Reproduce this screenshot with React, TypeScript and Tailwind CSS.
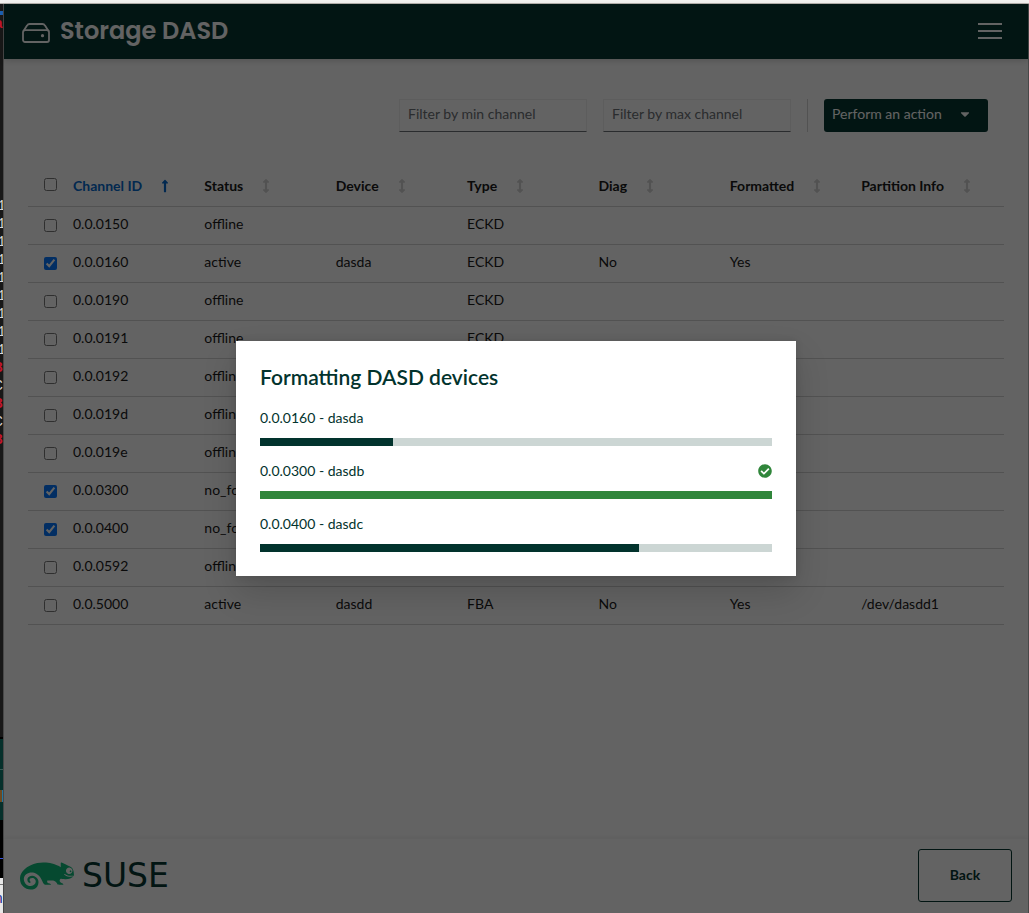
import React from "react";
import { FaArrowsAltV, FaCaretDown, FaCheckCircle, FaLongArrowAltUp } from "react-icons/fa";
import { SiSuse } from "react-icons/si";

type Device = {
  channel: string;
  status: string;
  device?: string;
  type: string;
  diag?: string;
  formatted?: string;
  partition?: string;
  selected?: boolean;
};

const devices: Device[] = [
  { channel: "0.0.0150", status: "offline", type: "ECKD" },
  { channel: "0.0.0160", status: "active", device: "dasda", type: "ECKD", diag: "No", formatted: "Yes", selected: true },
  { channel: "0.0.0190", status: "offline", type: "ECKD" },
  { channel: "0.0.0191", status: "offline", type: "ECKD" },
  { channel: "0.0.0192", status: "offline", type: "ECKD" },
  { channel: "0.0.019d", status: "offline", type: "ECKD" },
  { channel: "0.0.019e", status: "offline", type: "ECKD" },
  { channel: "0.0.0300", status: "no_format", device: "dasdb", type: "ECKD", diag: "No", formatted: "No", selected: true },
  { channel: "0.0.0400", status: "no_format", device: "dasdc", type: "ECKD", diag: "No", formatted: "No", selected: true },
  { channel: "0.0.0592", status: "offline", type: "ECKD" },
  { channel: "0.0.5000", status: "active", device: "dasdd", type: "FBA", diag: "No", formatted: "Yes", partition: "/dev/dasdd1" },
];

const columns = ["Channel ID", "Status", "Device", "Type", "Diag", "Formatted", "Partition Info"];

const jobs = [
  { name: "0.0.0160 - dasda", value: 26 },
  { name: "0.0.0300 - dasdb", value: 100 },
  { name: "0.0.0400 - dasdc", value: 74 },
];

const terminalLines = ["1", "1", "1", "1", "1", "1", "1", "1", "1", "8", "C", "8", "C", "8"];

const terminalStyles: Record<string, string> = {
  "1": "justify-center text-[#d8d8d8]",
  "8": "justify-end font-bold text-[#c4142c]",
  C: "justify-end text-[#d8d8d8]",
};

function TerminalEdge() {
  return (
    <div aria-hidden="true" className="flex w-[3px] shrink-0 flex-col overflow-hidden bg-[#181818] font-['Liberation_Mono',monospace] text-sm">
      <div className="mt-[7px] h-1 bg-[#1c62b5]" />
      <div className="flex h-[18px] shrink-0 items-center justify-end font-bold text-[#c4142c]">a</div>
      <div className="h-[164px] shrink-0" />
      {terminalLines.map((line, i) => (
        <div key={i} className={`flex h-[18px] shrink-0 items-center ${terminalStyles[line]}`}>
          {line}
        </div>
      ))}
      <div className="min-h-0 flex-1" />
      <div className="h-8 shrink-0 border-t-2 border-black bg-[#06302b]" />
      <div className="h-[21px] shrink-0 border-t border-[#3a5a55] bg-[#06302b]" />
      <div className="flex h-3 shrink-0 justify-end bg-[#6b4a22]">
        <div className="w-px bg-[#2277a5]" />
      </div>
      <div className="h-[18px] shrink-0 bg-[#06302b]" />
      <div className="h-[38px] shrink-0 bg-black" />
      <div className="h-5 shrink-0 border-t border-[#3a55e0] bg-black" />
      <div className="h-[7px] shrink-0 border-b border-[#777] bg-[#e8e8e8]" />
      <div className="flex h-7 shrink-0 items-center justify-end bg-[#e8e8e8] text-[#1c1c8c]">n</div>
    </div>
  );
}

function DriveIcon() {
  return (
    <svg viewBox="0 -4 28 24" className="h-6 w-7" fill="none" stroke="currentColor" strokeWidth="1.8" strokeLinejoin="round" aria-hidden="true">
      <path d="M1.200 8.500 5 2.600Q5.900 1 7.600 1H20.400Q22.100 1 23 2.600L26.800 8.500" />
      <rect x="1" y="7.200" width="26" height="11.800" rx="2" />
      <circle cx="20.500" cy="12.700" r="1.600" fill="currentColor" stroke="none" />
    </svg>
  );
}

function FilterInput({ id, label }: { id: string; label: string }) {
  return (
    <input
      id={id}
      type="text"
      aria-label={label}
      placeholder={label}
      className="h-[33px] w-[188px] border border-[#f0f0f0] border-b-[#6a6e73] bg-white px-2 pb-1 text-sm text-[#151515] placeholder:text-[#6a6e73]"
    />
  );
}

function DeviceTable() {
  return (
    <table className="mt-8 w-full table-fixed text-left text-sm">
      <colgroup>
        <col className="w-[37px]" />
        <col className="w-[13.46%]" />
        <col className="w-[13.46%]" />
        <col className="w-[13.46%]" />
        <col className="w-[13.46%]" />
        <col className="w-[13.46%]" />
        <col className="w-[13.46%]" />
        <col />
      </colgroup>
      <thead>
        <tr className="h-[42px] border-b border-[#d2d2d2]">
          <th className="pl-4">
            <input type="checkbox" aria-label="Select all devices" className="block size-[13px]" />
          </th>
          {columns.map((name, i) => (
            <th key={name} className="px-2 pt-[2px] font-bold whitespace-nowrap">
              <button type="button" className={i === 0 ? "flex items-center gap-4 text-[#0066cc]" : "flex items-center gap-4"}>
                {name}
                {i === 0 ? <FaLongArrowAltUp className="size-3.5" /> : <FaArrowsAltV className="size-3.5 text-[#d2d2d2]" />}
              </button>
            </th>
          ))}
        </tr>
      </thead>
      <tbody>
        {devices.map((d) => (
          <tr key={d.channel} className="h-[38px] border-b border-[#d2d2d2]">
            <td className="pl-4">
              <input type="checkbox" aria-label={`Select ${d.channel}`} defaultChecked={d.selected} className="block size-[13px]" />
            </td>
            <td className="px-2 pb-[2px]">{d.channel}</td>
            <td className="px-2 pb-[2px]">{d.status}</td>
            <td className="px-2 pb-[2px]">{d.device}</td>
            <td className="px-2 pb-[2px]">{d.type}</td>
            <td className="px-2 pb-[2px]">{d.diag}</td>
            <td className="px-2 pb-[2px]">{d.formatted}</td>
            <td className="px-2 pb-[2px]">{d.partition}</td>
          </tr>
        ))}
      </tbody>
    </table>
  );
}

function ProgressDialog() {
  return (
    <div className="absolute inset-0 z-10 flex items-center justify-center bg-[#030303]/62">
      <div
        role="dialog"
        aria-modal="true"
        aria-labelledby="dialog-title"
        className="w-[560px] max-w-full bg-white p-6 text-[#02332d] shadow-[0_16px_32px_rgba(3,3,3,0.16),0_0_8px_rgba(3,3,3,0.1)]"
      >
        <h2 id="dialog-title" className="mb-5 text-[21px] leading-6 font-semibold">Formatting DASD devices</h2>
        <div className="flex flex-col gap-4">
          {jobs.map((job) => (
            <div key={job.name}>
              <div className="mb-3 flex h-[17px] items-center justify-between text-sm">
                <span>{job.name}</span>
                {job.value === 100 && <FaCheckCircle className="size-3.5 text-[#30863b]" />}
              </div>
              <div role="progressbar" aria-label={job.name} aria-valuenow={job.value} aria-valuemin={0} aria-valuemax={100} className="h-2 bg-[#ccd6d4]">
                <div className={job.value === 100 ? "h-full bg-[#30863b]" : "h-full bg-[#02332d]"} style={{ width: `${job.value}%` }} />
              </div>
            </div>
          ))}
        </div>
      </div>
    </div>
  );
}

export default function App() {
  return (
    <div className="flex min-h-screen flex-col font-[Lato,sans-serif] text-[#151515]">
      <div className="h-1 shrink-0 border-b border-[#b5b0ac] bg-[#f3f1ef]" />
      <div className="flex flex-1">
        <TerminalEdge />
        <div className="relative flex flex-1 flex-col border-x border-[#484848] bg-white">
          <header className="flex h-[55px] items-center justify-between bg-[#02332d] pr-[26px] pb-[2px] pl-[18px] text-white shadow-[0_2px_6px_rgba(3,3,3,0.16)]">
            <div className="flex items-center gap-[10px]">
              <DriveIcon />
              <h1 className="font-[Poppins,Inter,sans-serif] text-2xl font-semibold">Storage DASD</h1>
            </div>
            <button type="button" aria-label="Open menu" className="flex w-6 flex-col gap-[5px]">
              <span className="h-0.5 bg-current" />
              <span className="h-0.5 bg-current" />
              <span className="h-0.5 bg-current" />
            </button>
          </header>
          <main className="flex-1 px-6 pt-10 pb-6">
            <div className="flex items-center justify-end gap-4 pr-4">
              <FilterInput id="min-channel" label="Filter by min channel" />
              <FilterInput id="max-channel" label="Filter by max channel" />
              <div className="h-[33px] w-px bg-[#d2d2d2]" />
              <button type="button" className="flex h-[33px] w-[164px] items-center gap-4 rounded-[3px] bg-[#02332d] px-2 pb-1 text-sm text-white">
                Perform an action
                <FaCaretDown className="size-3.5" />
              </button>
            </div>
            <DeviceTable />
          </main>
          <footer className="flex h-[74px] items-center justify-between bg-white px-4 pb-px shadow-[0_-2px_4px_rgba(3,3,3,0.05)]">
            <div className="flex items-center gap-2">
              <SiSuse className="size-[54px] text-[#0cba79]" />
              <span className="font-['DejaVu_Sans',sans-serif] text-[33px] leading-10 text-[#02332d]">SUSE</span>
            </div>
            <button type="button" className="h-[53px] w-[94px] rounded-[3px] border border-[#02332d] pb-[2px] text-sm font-bold text-[#02332d]">
              Back
            </button>
          </footer>
          <ProgressDialog />
        </div>
      </div>
    </div>
  );
}
